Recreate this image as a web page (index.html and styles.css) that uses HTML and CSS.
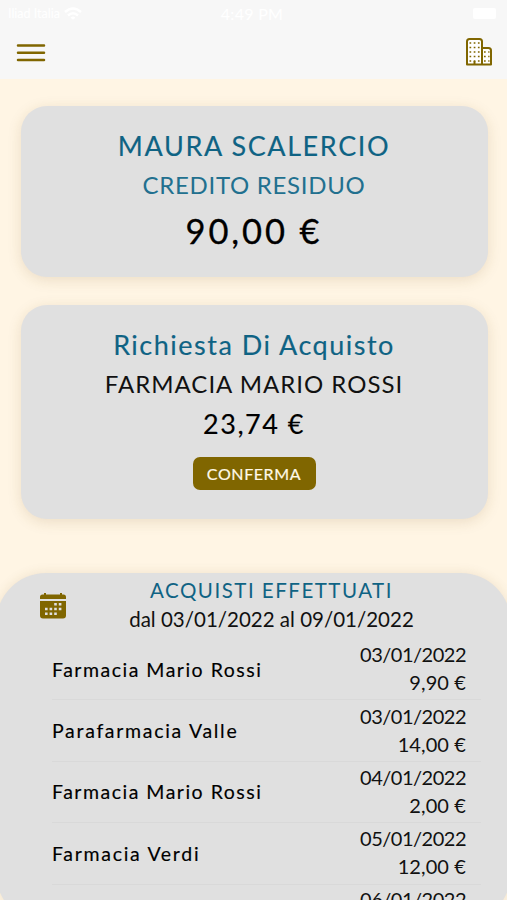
FILE: index.html
```html
<!DOCTYPE html>
<html lang="it">
<head>
<meta charset="utf-8">
<title>Credito residuo</title>
<link rel="stylesheet" href="styles.css">
</head>
<body>
<header class="header">
  <div class="status">
    <span class="carrier">Iliad Italia
      <svg class="wifi" viewBox="0 0 18 14" width="18" height="14"><path d="M1 5Q9-2 17 5M4 8.500Q9 4 14 8.500M7.500 11.500Q9 10 10.500 11.500" fill="none" stroke="#fff" stroke-width="2.500"/></svg>
    </span>
    <span class="clock">4:49 PM</span>
    <span class="battery"></span>
  </div>
  <div class="toolbar">
    <svg class="menu" viewBox="0 0 30 20" width="30" height="20"><path d="M2 2.600H28M2 9.800H28M2 17H28" stroke="#806600" stroke-width="2.500" stroke-linecap="round"/></svg>
    <svg class="building" viewBox="0 0 28 30" width="28" height="30">
      <path d="M17 27.500V4.500Q17 2 14.500 2H4.500Q2 2 2 4.500V27.500H26V13.500Q26 11 23.500 11H17V27.500" fill="#fff" stroke="#806600" stroke-width="2" stroke-linejoin="round"/>
      <path d="M4.500 6H15M4.500 10.500H15M4.500 15H15M4.500 19.500H15M4.500 24H15M19 15H24.500M19 19.500H24.500M19 24H24.500" stroke="#806600" stroke-width="1.700" stroke-dasharray="1.700 2.500"/>
      <path d="M9.500 24V27.500" stroke="#806600" stroke-width="2"/>
    </svg>
  </div>
</header>
<main class="content">
  <section class="card credit">
    <h1 class="title name">MAURA SCALERCIO</h1>
    <p class="line subtitle">CREDITO RESIDUO</p>
    <p class="line balance">90,00 €</p>
  </section>
  <section class="card request">
    <h2 class="title heading">Richiesta Di Acquisto</h2>
    <p class="line shop">FARMACIA MARIO ROSSI</p>
    <p class="line amount">23,74 €</p>
    <button class="confirm">CONFERMA</button>
  </section>
  <section class="panel">
    <div class="panel-head">
      <svg class="calendar" viewBox="0 0 28 28" width="28" height="28">
        <path d="M1 7V5Q1 2.500 3.500 2.500H5V1H7V2.500H21V1H23V2.500H24.500Q27 2.500 27 5V7ZM1 9H27V23.500Q27 26.500 24 26.500H4Q1 26.500 1 23.500Z" fill="#806600"/>
        <path d="M15.200 12.300H23M6 17H23M6 21.700H18.500" stroke="#e0e0e0" stroke-width="2.600" stroke-dasharray="2.600 2"/>
      </svg>
      <div class="period">
        <h2 class="purchases">ACQUISTI EFFETTUATI</h2>
        <p class="dates">dal 03/01/2022 al 09/01/2022</p>
      </div>
    </div>
    <ul class="list">
      <li class="item"><span class="store">Farmacia Mario Rossi</span><div class="info"><p class="date">03/01/2022</p><p class="price">9,90 €</p></div></li>
      <li class="item"><span class="store wide">Parafarmacia Valle</span><div class="info"><p class="date">03/01/2022</p><p class="price">14,00 €</p></div></li>
      <li class="item"><span class="store">Farmacia Mario Rossi</span><div class="info"><p class="date">04/01/2022</p><p class="price">2,00 €</p></div></li>
      <li class="item"><span class="store wide">Farmacia Verdi</span><div class="info"><p class="date">05/01/2022</p><p class="price">12,00 €</p></div></li>
      <li class="item"><span class="store"></span><div class="info"><p class="date">06/01/2022</p></div></li>
    </ul>
  </section>
</main>
</body>
</html>
```
FILE: styles.css
```css
* { box-sizing: border-box; margin: 0; padding: 0; }
html { height: 900px; overflow: hidden; }
body { width: 507px; height: 900px; overflow: hidden; background: #fff5e4; color: #111; font-family: Lato, "Open Sans", sans-serif; }
.header { height: 79px; background: #f7f7f7; }
.status { height: 27px; display: grid; grid-template-columns: 1fr auto 1fr; align-items: center; padding: 0 11px 0 8px; color: #fff; font-size: 14px; }
.carrier { display: flex; align-items: center; gap: 4px; font-size: 12px; }
.carrier { font-size: 12.500px; }
.clock { font-weight: 400; font-size: 16px; letter-spacing: .3px; }
.battery { justify-self: end; width: 23px; height: 11px; border-radius: 2px; background: #fff; }
.toolbar { display: flex; justify-content: space-between; padding: 10px 14px 0 16px; }
.menu { margin-top: 6px; }
.content { padding: 27px 0 0; height: 821px; overflow: hidden; }
.card { width: 467px; margin: 0 0 0 20.500px; border-radius: 26px; background: #e0e0e0; box-shadow: 0 3px 14px rgba(120, 90, 30, .15); text-align: center; white-space: nowrap; }
.credit { height: 171px; padding-top: 20px; }
.request { height: 214px; margin-top: 28px; padding-top: 20px; }
.title { font-size: 27px; font-weight: 400; line-height: 40px; color: #0f6384; -webkit-text-stroke: .15px; }
.line { line-height: 40px; }
.name { letter-spacing: 1.600px; }
.subtitle { font-size: 24px; line-height: 38px; color: #22708f; letter-spacing: .7px; }
.balance { font-size: 34.500px; line-height: 53px; color: #000; letter-spacing: 2.900px; -webkit-text-stroke: .3px; }
.heading { letter-spacing: 1.500px; }
.shop { font-size: 24px; line-height: 38px; letter-spacing: 1px; }
.amount { font-size: 27px; line-height: 42px; letter-spacing: 1.500px; color: #000; -webkit-text-stroke: .15px; }
.confirm { display: block; width: 123px; height: 33px; margin: 12px auto 0; border: 0; border-radius: 7px; background: #806600; color: #fff9e8; font: 16px Lato, sans-serif; letter-spacing: .6px; -webkit-text-stroke: .2px; }
.panel { height: 350px; margin: 54px -4px 0; padding: 0 4px; border-radius: 50px; background: #e0e0e0; box-shadow: 0 0 12px rgba(120, 90, 30, .12); }
.panel-head { display: flex; height: 66px; padding-left: 39px; }
.calendar { margin-top: 19px; flex: none; }
.period { width: 409px; text-align: center; padding-top: 2px; }
.purchases { font-size: 20.500px; font-weight: 400; line-height: 30px; color: #0f6384; letter-spacing: 1.500px; }
.dates { font-size: 20.500px; line-height: 28px; }
.list { list-style: none; margin: 0 26px 0 52px; }
.item { height: 61.400px; display: flex; justify-content: space-between; align-items: center; padding-right: 15px; border-bottom: 1px solid #d9d9d9; }
.item:last-child { align-items: flex-start; border: 0; }
.store { font-size: 19.500px; color: #000; letter-spacing: 1.500px; -webkit-text-stroke: .15px; }
.wide { letter-spacing: 1.700px; }
.info { font-size: 20px; line-height: 28px; text-align: right; padding-bottom: 2px; }
.date { letter-spacing: -.5px; }
.price { letter-spacing: .1px; }
```
